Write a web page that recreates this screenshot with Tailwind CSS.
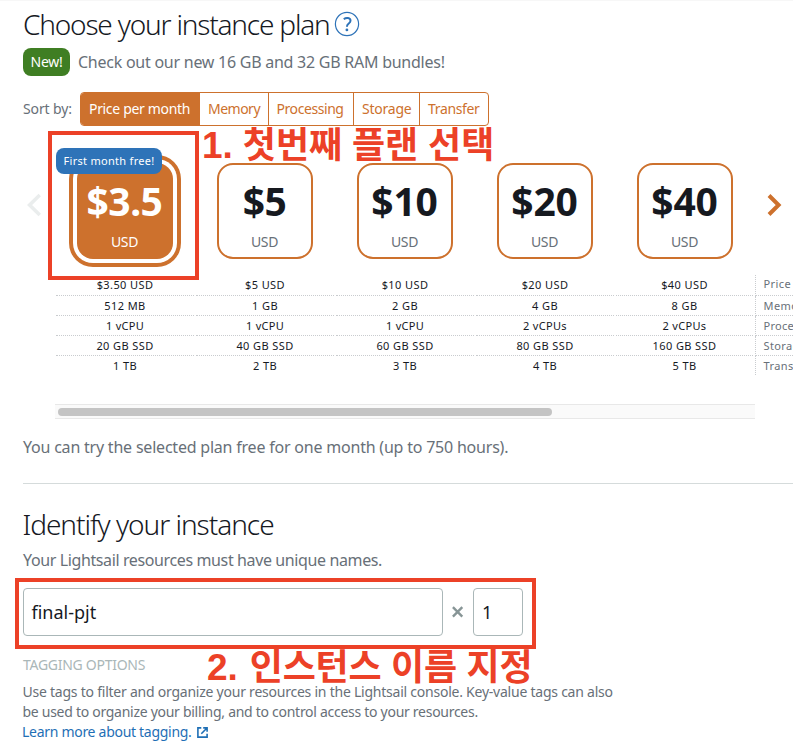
<!DOCTYPE html>
<html lang="en">
<head>
<meta charset="utf-8">
<title>Create an instance</title>
<script src="https://cdn.jsdelivr.net/npm/@tailwindcss/browser@4"></script>
</head>
<body class="relative h-[746px] w-[793px] overflow-hidden bg-white font-['Noto_Sans',sans-serif] whitespace-nowrap text-[#687078]">
<main class="flex flex-col border-t border-[#f7f7f7]">
  <section class="flex flex-col pl-[23px]">
    <div class="mt-[3px] flex h-10 items-center gap-[5px]">
      <h1 class="w-[306px] text-[28px] leading-10 font-light tracking-[-1.19px] text-[#16191f]">Choose your instance plan</h1>
      <svg class="h-[26px] w-[26px]" viewBox="0 0 26 26" fill="none"><circle cx="13" cy="13" r="11.600" stroke="#2e73b8" stroke-width="1.200"/><path d="M9.800 8.200C12 6.300 16.500 6.500 16.500 9.800c0 2.700-3.500 2.700-3.500 5.400v.6" stroke="#2e73b8" stroke-width="2"/><circle cx="12.900" cy="18.900" r="1.400" fill="#2e73b8"/></svg>
    </div>
    <div class="mt-1 flex h-7 items-center gap-2">
      <span class="flex h-7 w-[47px] items-center justify-center rounded-lg bg-[#3f7e23] text-sm tracking-[-0.26px] text-white">New!</span>
      <span class="text-base tracking-[-0.25px]">Check out our new 16 GB and 32 GB RAM bundles!</span>
    </div>
    <div class="mt-4 flex h-[34px] items-center text-sm">
      <span class="w-[57px] tracking-[-0.11px]">Sort by:</span>
      <div class="flex h-[34px] w-[409px] overflow-hidden rounded border border-[#cd712d] text-[#cd712d]">
        <span class="flex w-[119px] items-center bg-[#cd712d] pl-2 tracking-[-0.33px] text-white">Price per month</span>
        <span class="flex w-[69px] items-center border-r border-[#cd712d] pl-2 tracking-[-0.51px]">Memory</span>
        <span class="flex w-[85px] items-center border-r border-[#cd712d] pl-[7.500px] tracking-[-0.43px]">Processing</span>
        <span class="flex w-[66px] items-center border-r border-[#cd712d] pl-2 tracking-[-0.23px]">Storage</span>
        <span class="flex flex-1 items-center pl-2 tracking-[-0.35px]">Transfer</span>
      </div>
    </div>
  </section>

  <section class="mt-[37px] flex h-[96px] items-center pl-[27px]">
    <svg class="mt-[-12px] h-[24px] w-[14px]" viewBox="0 0 14 24" fill="none" stroke="#eaeded" stroke-width="3.600"><path d="M12.800 2 2.600 12l10.200 10"/></svg>
    <div class="ml-9 flex w-[656px] justify-between">
      <div class="relative flex h-24 w-24 flex-col items-center rounded-2xl bg-[#cd712d] text-white shadow-[0_0_0_4px_#fff,0_0_0_8px_#cd712d]">
        <span class="mt-[10px] mr-px h-14 text-[39px] leading-14 font-bold tracking-[-0.5px]">$3.5</span>
        <span class="mt-[3px] mr-px text-sm leading-5 tracking-[-0.4px]">USD</span>
        <span class="absolute top-[-15px] left-[-21px] flex h-[26px] w-[106px] items-center justify-center rounded-lg bg-[#2e73b8] text-[11px] tracking-[0.29px]">First month free!</span>
      </div>
      <div class="flex h-24 w-24 flex-col items-center rounded-2xl border-2 border-[#cd712d]">
        <span class="mt-2 mr-px h-14 text-[39px] leading-14 font-bold tracking-[-0.5px] text-[#16191f]">$5</span>
        <span class="mt-[3px] mr-px text-sm leading-5 tracking-[-0.4px]">USD</span>
      </div>
      <div class="flex h-24 w-24 flex-col items-center rounded-2xl border-2 border-[#cd712d]">
        <span class="mt-2 mr-px h-14 text-[39px] leading-14 font-bold tracking-[-0.2px] text-[#16191f]">$10</span>
        <span class="mt-[3px] mr-px text-sm leading-5 tracking-[-0.4px]">USD</span>
      </div>
      <div class="flex h-24 w-24 flex-col items-center rounded-2xl border-2 border-[#cd712d]">
        <span class="mt-2 mr-px h-14 text-[39px] leading-14 font-bold tracking-[-0.2px] text-[#16191f]">$20</span>
        <span class="mt-[3px] mr-px text-sm leading-5 tracking-[-0.4px]">USD</span>
      </div>
      <div class="flex h-24 w-24 flex-col items-center rounded-2xl border-2 border-[#cd712d]">
        <span class="mt-2 mr-px h-14 text-[39px] leading-14 font-bold tracking-[-0.2px] text-[#16191f]">$40</span>
        <span class="mt-[3px] mr-px text-sm leading-5 tracking-[-0.4px]">USD</span>
      </div>
    </div>
    <svg class="mt-[-12px] ml-[34px] h-[24px] w-[15px]" viewBox="0 0 15 24" fill="none" stroke="#cd712d" stroke-width="4"><path d="m2 2.500 9.600 9.500L2 21.500"/></svg>
  </section>

  <section class="mt-4 flex flex-col pl-[55px] text-center text-[11px] text-[#16191f]">
    <div class="grid h-[21px] grid-cols-[138px_138px_138px_138px_137px_1fr] gap-x-[2px] pl-px leading-5 tracking-[0.4px]">
      <span class="border-b border-dotted border-[#c9cccf]">$3.50 USD</span><span class="border-b border-dotted border-[#c9cccf]">$5 USD</span><span class="border-b border-dotted border-[#c9cccf]">$10 USD</span><span class="border-b border-dotted border-[#c9cccf]">$20 USD</span><span class="border-b border-dotted border-[#c9cccf]">$40 USD</span><span class="min-w-0 overflow-hidden border-b border-l border-dotted border-[#c9cccf] pl-[7.500px] text-left leading-[18px] text-[#687078]">Price</span>
    </div>
    <div class="grid h-5 grid-cols-[138px_138px_138px_138px_137px_1fr] gap-x-[2px] pl-px leading-[19px] tracking-[0.4px]">
      <span class="border-b border-dotted border-[#c9cccf]">512 MB</span><span class="border-b border-dotted border-[#c9cccf]">1 GB</span><span class="border-b border-dotted border-[#c9cccf]">2 GB</span><span class="border-b border-dotted border-[#c9cccf]">4 GB</span><span class="border-b border-dotted border-[#c9cccf]">8 GB</span><span class="min-w-0 overflow-hidden border-b border-l border-dotted border-[#c9cccf] pl-[7.500px] text-left text-[#687078]">Memory</span>
    </div>
    <div class="grid h-5 grid-cols-[138px_138px_138px_138px_137px_1fr] gap-x-[2px] pl-px leading-[19px] tracking-[0.3px]">
      <span class="border-b border-dotted border-[#c9cccf]">1 vCPU</span><span class="border-b border-dotted border-[#c9cccf]">1 vCPU</span><span class="border-b border-dotted border-[#c9cccf]">1 vCPU</span><span class="border-b border-dotted border-[#c9cccf]">2 vCPUs</span><span class="border-b border-dotted border-[#c9cccf]">2 vCPUs</span><span class="min-w-0 overflow-hidden border-b border-l border-dotted border-[#c9cccf] pl-[7.500px] text-left text-[#687078]">Processing</span>
    </div>
    <div class="grid h-5 grid-cols-[138px_138px_138px_138px_137px_1fr] gap-x-[2px] pl-px leading-[19px] tracking-[0.4px]">
      <span class="border-b border-dotted border-[#c9cccf]">20 GB SSD</span><span class="border-b border-dotted border-[#c9cccf]">40 GB SSD</span><span class="border-b border-dotted border-[#c9cccf]">60 GB SSD</span><span class="border-b border-dotted border-[#c9cccf]">80 GB SSD</span><span class="border-b border-dotted border-[#c9cccf]">160 GB SSD</span><span class="min-w-0 overflow-hidden border-b border-l border-dotted border-[#c9cccf] pl-[7.500px] text-left text-[#687078]">Storage</span>
    </div>
    <div class="grid h-[19px] grid-cols-[138px_138px_138px_138px_137px_1fr] gap-x-[2px] pl-px leading-[19px] tracking-[0.4px]">
      <span>1 TB</span><span>2 TB</span><span>3 TB</span><span>4 TB</span><span>5 TB</span><span class="min-w-0 overflow-hidden border-l border-dotted border-[#c9cccf] pl-[7.500px] text-left text-[#687078]">Transfer</span>
    </div>
    <div class="mt-[29px] h-[15px] w-[700px] border-y border-[#e8e8e8] bg-[#fafafa] pt-[3px] pl-[3px]"><div class="h-2 w-[494px] rounded-full bg-[#c4c4c4]"></div></div>
  </section>

  <section class="flex flex-col pl-[23px]">
    <p class="mt-[16px] text-base leading-6 tracking-[-0.21px]">You can try the selected plan free for one month (up to 750 hours).</p>
    <hr class="mt-6 border-[#d5dbdb]">
    <h2 class="mt-5 ml-[-0.5px] text-[28px] leading-10 font-light tracking-[-1.03px] text-[#16191f]">Identify your instance</h2>
    <p class="mt-1 text-base leading-6 tracking-[-0.38px]">Your Lightsail resources must have unique names.</p>
    <div class="mt-4 flex h-12 items-center text-lg text-[#16191f]">
      <span class="flex h-12 w-[420px] items-center rounded border border-[#aab7b8] pl-[7.500px]">final-pjt</span>
      <svg class="ml-[9px] h-3 w-3" viewBox="0 0 12 12" fill="none" stroke="#879596" stroke-width="2.400"><path d="m.900 1.200 9.400 9.400M10.300 1.200.900 10.600"/></svg>
      <span class="ml-[9px] flex h-12 w-[50px] items-center rounded border border-[#aab7b8] pl-2">1</span>
    </div>
    <h3 class="mt-[19px] text-sm leading-5 tracking-[-0.28px] text-[#aab7b8]">TAGGING OPTIONS</h3>
    <p class="mt-[7px] ml-[-0.5px] text-sm leading-5"><span class="tracking-[-0.235px]">Use tags to filter and organize your resources in the Lightsail console. Key-value tags can also</span><br><span class="tracking-[-0.28px]">be used to organize your billing, and to control access to your resources.</span></p>
    <a class="ml-[-1px] flex items-center gap-[5px] text-sm leading-5 tracking-[-0.29px] text-[#1f6fb5]">Learn more about tagging. <svg class="h-[11px] w-[11px]" viewBox="0 0 11 11" fill="none" stroke="#1f6fb5" stroke-width="1.600"><path d="M4.300.9H.9v9.200h9.200V6.700M6.200.9h3.900v3.900M10 1 4.300 6.700"/></svg></a>
  </section>
</main>

<div class="absolute top-[131px] left-[48px] h-[149px] w-[151px] border-4 border-[#ec4127]"></div>
<div class="absolute top-[578px] left-[15px] h-[71px] w-[521px] border-4 border-[#ec4127]"></div>
<p class="absolute top-[128px] left-[202px] flex items-baseline gap-[10px] text-[36px] leading-9 font-bold text-[#ec4127] font-['Liberation_Sans','Noto_Sans_CJK_KR',sans-serif]"><span class="text-[37px]">1.</span><span class="tracking-[-0.05px]">첫번째 플랜 선택</span></p>
<p class="absolute top-[650px] left-[207px] flex items-baseline gap-[12px] text-[36px] leading-9 font-bold text-[#ec4127] font-['Liberation_Sans','Noto_Sans_CJK_KR',sans-serif]"><span class="text-[37px]">2.</span><span class="tracking-[-0.25px]">인스턴스 이름 지정</span></p>
</body>
</html>
